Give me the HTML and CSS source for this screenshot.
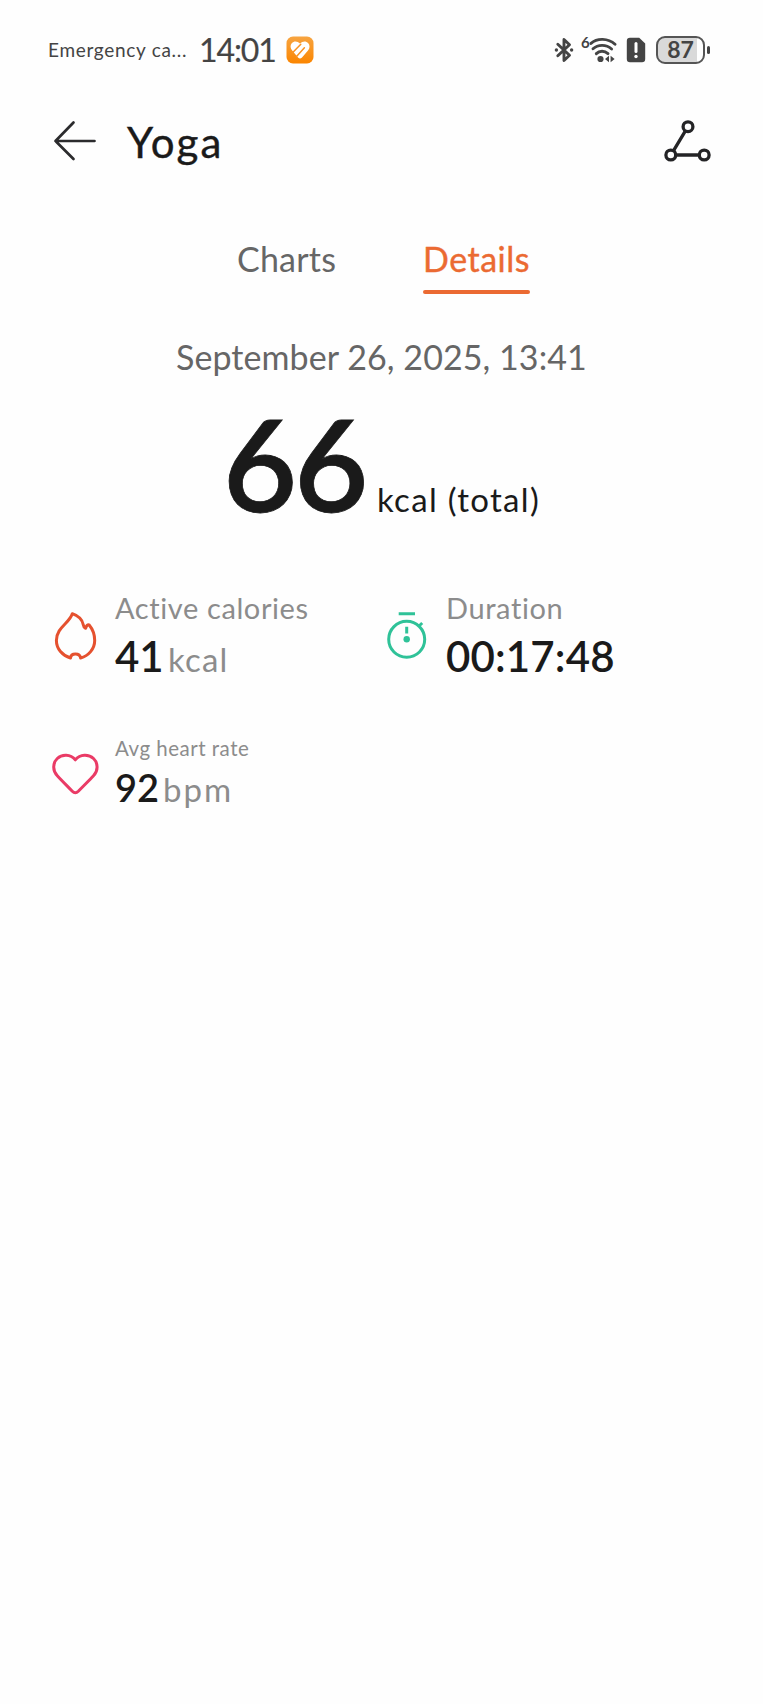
FILE: index.html
```html
<!DOCTYPE html>
<html lang="en">
<head>
    <meta charset="UTF-8">
    <meta name="viewport" content="width=device-width, initial-scale=1.0">
    <title>Yoga</title>
    <link rel="stylesheet" href="styles.css">
</head>
<body>
    <div class="status-bar">
        <span class="carrier">Emergency ca...</span>
        <span class="clock">14:01</span>
        <svg class="app-badge" width="28" height="28" viewBox="0 0 28 28">
            <defs>
                <linearGradient id="badge" x1="0" y1="0" x2="0" y2="1">
                    <stop offset="0" stop-color="#f7a440"/>
                    <stop offset="1" stop-color="#fb8500"/>
                </linearGradient>
            </defs>
            <rect x="0.5" y="0.5" width="27" height="27" rx="6.5" fill="url(#badge)"/>
            <path d="M14 7.6C11.5 4.8 7.8 4.9 5.9 7C3.9 9.3 4.2 12.4 6.2 14.6L12 21.6Q14 23.6 16 21.6L22 14.6C24 12.4 24.1 9.3 22.1 7C20.2 4.9 16.5 4.8 14 7.6Z" fill="#fff"/>
            <path d="M6.5 16.8L14.8 8.2M10.3 20.8L18.4 11.8" fill="none" stroke="#f99322" stroke-width="1.5" stroke-linecap="round"/>
        </svg>
        <div class="status-icons">
            <svg class="bluetooth" width="20" height="26" viewBox="0 0 20 26">
                <path d="M3.8 7.2L15.5 18.3L10 23.5V2.5L15.5 7.7L3.8 18.8" fill="none" stroke="#444" stroke-width="2.9" stroke-linejoin="round" stroke-linecap="round"/>
                <circle cx="2.4" cy="13" r="1.7" fill="#444"/>
                <circle cx="17.6" cy="13" r="1.7" fill="#444"/>
            </svg>
            <div class="wifi">
                <span class="wifi-gen">6</span>
                <svg width="28" height="28" viewBox="8 0 28 28">
                    <g fill="none" stroke="#444" stroke-width="2.9" stroke-linecap="round">
                        <path d="M10 7.4C16 1.9 27 1.9 34 8.3"/>
                        <path d="M12 12.8C17 8.2 25.2 8.2 30.6 13"/>
                        <path d="M15.3 17.6C18.5 14.4 23.5 14.4 27 17.6"/>
                    </g>
                    <circle cx="19.5" cy="23" r="3.1" fill="#444"/>
                    <path d="M28 19.7V26.3L24 23ZM29.6 19.7V26.3L33.6 23Z" fill="#444"/>
                </svg>
            </div>
            <svg class="sim" width="20" height="26" viewBox="0 0 20 26">
                <path d="M4 .8H13.2L19.2 6.6V22Q19.2 25.2 16 25.2H4Q.8 25.2 .8 22V4Q.8 .8 4 .8Z" fill="#444"/>
                <path d="M10 6.5V14.6" stroke="#fff" stroke-width="3" stroke-linecap="round"/>
                <circle cx="10" cy="19.5" r="1.7" fill="#fff"/>
            </svg>
            <div class="battery">
                <span class="battery-level">87</span>
            </div>
            <span class="battery-tip"></span>
        </div>
    </div>

    <div class="header">
        <svg class="back" width="44" height="44" viewBox="0 0 44 44">
            <path d="M21.5 3.5L3.5 22L21.5 40M3.5 22H42.5" fill="none" stroke="#2b2b2d" stroke-width="2.7" stroke-linecap="round" stroke-linejoin="round"/>
        </svg>
        <h1 class="title">Yoga</h1>
        <svg class="share" width="48" height="44" viewBox="0 0 48 44">
            <g fill="none" stroke="#242426" stroke-width="3.3">
                <circle cx="24" cy="7.7" r="4.9"/>
                <circle cx="6.8" cy="36" r="4.9"/>
                <circle cx="40.2" cy="36" r="4.9"/>
                <path d="M21.4 11.9L9.4 31.8M11.7 36H35.3"/>
            </g>
        </svg>
    </div>

    <div class="tabs">
        <div class="tab">Charts</div>
        <div class="tab active">Details</div>
    </div>

    <div class="date">September 26, 2025, 13:41</div>

    <div class="total">
        <span class="total-value">66</span>
        <span class="total-unit">kcal (total)</span>
    </div>

    <div class="metrics">
        <div class="metric">
            <svg class="metric-icon" width="50" height="50" viewBox="0 0 50 50">
                <path d="M22.3 3.7C19.5 13 6.4 17.5 6.4 30.5C6.4 39 12.5 45.5 20.5 48C21 42.8 29.8 42.8 30.6 48C38.5 46 44.7 38.8 44.7 30.5C44.7 24.5 42.5 19 39 14.8C37.8 14.3 36.3 15.6 35.6 18.3C33.8 17.5 33.5 16.5 33.2 14.5C32 9 27.5 5.5 22.3 3.7Z" fill="none" stroke="#e5512f" stroke-width="3" stroke-linejoin="round"/>
            </svg>
            <div class="metric-text">
                <div class="label">Active calories</div>
                <div class="value"><span class="number calories">41</span><span class="unit">kcal</span></div>
            </div>
        </div>
        <div class="metric">
            <svg class="metric-icon" width="50" height="50" viewBox="0 0 50 50">
                <g fill="none" stroke="#2fc298" stroke-width="3">
                    <circle cx="25.7" cy="29.3" r="18"/>
                    <path d="M17.7 3.8H34M38 16L41.2 13M25.7 16.8V23.5"/>
                </g>
                <circle cx="25.7" cy="29.3" r="3.2" fill="#2fc298"/>
            </svg>
            <div class="metric-text">
                <div class="label">Duration</div>
                <div class="value"><span class="number duration">00:17:48</span></div>
            </div>
        </div>
        <div class="metric">
            <svg class="metric-icon" width="50" height="50" viewBox="0 0 50 50">
                <path d="M25.3 11.8C20.5 6 12 6 7.3 10.5C2.5 15.2 2.5 22.8 7.3 27.7C12 32.8 17 37.8 22.3 43.3Q25.3 46.3 28.3 43.3C33.5 37.8 38.8 32.8 43.5 27.7C48.3 22.8 48.3 15.2 43.5 10.5C38.7 6 30.2 6 25.3 11.8Z" fill="none" stroke="#ea3b66" stroke-width="3" stroke-linejoin="round"/>
            </svg>
            <div class="metric-text">
                <div class="label small">Avg heart rate</div>
                <div class="value"><span class="number heart">92</span><span class="unit bpm">bpm</span></div>
            </div>
        </div>
    </div>
</body>
</html>
```

FILE: styles.css
```css
* {
    box-sizing: border-box;
}
body {
    margin: 0;
    min-height: 1704px;
    background: #fefefe;
    font-family: Lato, 'Open Sans', sans-serif;
    color: #1a1a1a;
    white-space: nowrap;
}
.status-bar {
    display: flex;
    align-items: center;
    height: 99px;
    padding: 0 53px 0 48px;
    color: #444;
}
.carrier {
    width: 151px;
    font-size: 19px;
    letter-spacing: 0.7px;
}
.clock {
    width: 87px;
    font-size: 32px;
    letter-spacing: -1.1px;
    -webkit-text-stroke: 0.2px #444;
}
.status-icons {
    display: flex;
    align-items: center;
    margin-left: auto;
}
.wifi {
    display: flex;
    align-items: flex-start;
    width: 36px;
    height: 28px;
    margin-left: 7px;
}
.wifi-gen {
    width: 8px;
    font-size: 15px;
    font-weight: 700;
    line-height: 13px;
}
.sim {
    margin-left: 9px;
}
.battery {
    width: 49px;
    height: 28px;
    margin-left: 10px;
    padding: 2px;
    border: 2px solid #555;
    border-radius: 9px;
    background: linear-gradient(90deg, #d9d9d9 87%, #fefefe 87%);
}
.battery-level {
    display: block;
    font-size: 23px;
    font-weight: 700;
    line-height: 19px;
    text-align: center;
}
.battery-tip {
    width: 3px;
    height: 8px;
    margin-left: 2px;
    border-radius: 2px;
    background: #444;
}
.header {
    display: flex;
    align-items: center;
    height: 84px;
    padding: 0 51px 0 52px;
}
.title {
    margin: 2px 0 0 31px;
    font-size: 42px;
    font-weight: 400;
    letter-spacing: 2.1px;
    -webkit-text-stroke: 0.4px #1a1a1a;
}
.share {
    margin-left: auto;
}
.tabs {
    display: flex;
    gap: 86px;
    margin-top: 56px;
    padding-left: 237px;
}
.tab {
    width: 100px;
    height: 55px;
    font-size: 34px;
    line-height: 40px;
    letter-spacing: 0.2px;
    color: #666;
}
.tab.active {
    position: relative;
    width: 107px;
    letter-spacing: 0.5px;
    text-align: center;
    color: #eb6a32;
    -webkit-text-stroke: 0.4px #eb6a32;
}
.tab.active::after {
    content: '';
    position: absolute;
    left: 0;
    right: 0;
    bottom: 0;
    height: 4px;
    border-radius: 2px;
    background: #eb6a32;
}
.date {
    margin-top: 43px;
    padding-left: 176px;
    font-size: 34px;
    line-height: 40px;
    letter-spacing: 0.07px;
    color: #666;
}
.total {
    display: flex;
    align-items: baseline;
    height: 96px;
    margin-top: 38px;
    padding-left: 223px;
    line-height: 96px;
}
.total-value {
    width: 154px;
    font-size: 128px;
    font-weight: 600;
    letter-spacing: -3px;
    -webkit-text-stroke: 0.8px #1a1a1a;
}
.total-unit {
    font-size: 33px;
    letter-spacing: 1.3px;
}
.metrics {
    display: grid;
    grid-template-columns: 331px 331px;
    row-gap: 55px;
    margin-top: 79px;
    padding-left: 50px;
}
.metric {
    display: flex;
    align-items: center;
    gap: 15px;
}
.label {
    margin-bottom: 5px;
    font-size: 29px;
    line-height: 36px;
    letter-spacing: 0.6px;
    color: #8c8c8c;
}
.label.small {
    margin-bottom: 1px;
    font-size: 20.5px;
    line-height: 26px;
    letter-spacing: 0.5px;
}
.value {
    display: flex;
    align-items: baseline;
    height: 49px;
    line-height: 50px;
}
.number {
    font-size: 42px;
    font-weight: 600;
}
.calories {
    width: 53px;
}
.duration {
    letter-spacing: 0.15px;
}
.heart {
    width: 48px;
    font-size: 38px;
}
.unit {
    font-size: 33px;
    letter-spacing: 1.2px;
    color: #8c8c8c;
}
.unit.bpm {
    letter-spacing: 2px;
}
```
